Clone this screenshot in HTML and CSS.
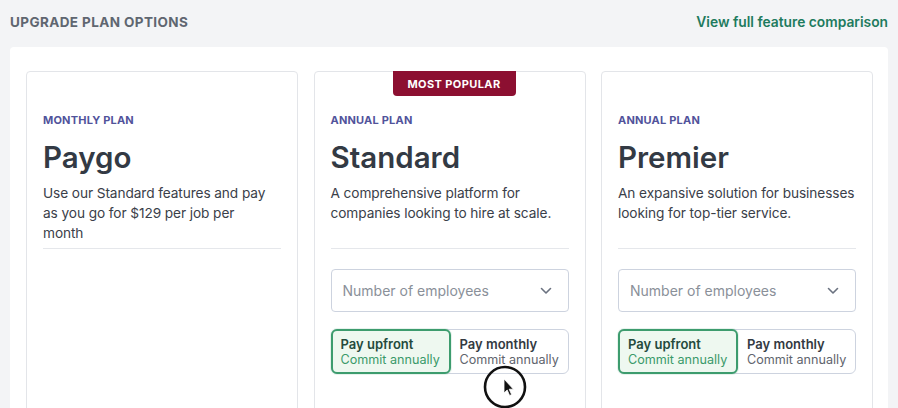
FILE: index.html
```html
<!DOCTYPE html>
<html>
<head>
<meta charset="utf-8">
<link rel="stylesheet" href="styles.css">
</head>
<body>
<div class="page">
  <header class="top">
    <h1 class="heading">UPGRADE PLAN OPTIONS</h1>
    <a class="compare" href="#">View full feature comparison</a>
  </header>
  <section class="panel">
    <div class="cards">
      <article class="card">
        <div class="plan-type">MONTHLY PLAN</div>
        <h2 class="plan-name">Paygo</h2>
        <p class="plan-desc">Use our Standard features and pay as you go for $129 per job per<br>month</p>
      </article>
      <article class="card">
        <div class="badge">MOST POPULAR</div>
        <div class="plan-type">ANNUAL PLAN</div>
        <h2 class="plan-name">Standard</h2>
        <p class="plan-desc">A comprehensive platform for companies looking to hire at scale.</p>
        <div class="select">
          <span class="placeholder">Number of employees</span>
          <svg class="chev" width="12" height="8" viewBox="0 0 12 8"><path d="M1.5 1.5 L6 6 L10.5 1.5" fill="none" stroke="#6b7280" stroke-width="1.6" stroke-linecap="round" stroke-linejoin="round"/></svg>
        </div>
        <div class="toggle">
          <div class="opt opt-on"><span class="opt-title">Pay upfront</span><span class="opt-sub">Commit annually</span></div>
          <div class="opt"><span class="opt-title">Pay monthly</span><span class="opt-sub">Commit annually</span></div>
        </div>
      </article>
      <article class="card">
        <div class="plan-type">ANNUAL PLAN</div>
        <h2 class="plan-name">Premier</h2>
        <p class="plan-desc">An expansive solution for businesses looking for top-tier service.</p>
        <div class="select">
          <span class="placeholder">Number of employees</span>
          <svg class="chev" width="12" height="8" viewBox="0 0 12 8"><path d="M1.5 1.5 L6 6 L10.5 1.5" fill="none" stroke="#6b7280" stroke-width="1.6" stroke-linecap="round" stroke-linejoin="round"/></svg>
        </div>
        <div class="toggle">
          <div class="opt opt-on"><span class="opt-title">Pay upfront</span><span class="opt-sub">Commit annually</span></div>
          <div class="opt"><span class="opt-title">Pay monthly</span><span class="opt-sub">Commit annually</span></div>
        </div>
      </article>
    </div>
  </section>
  <svg class="cursor" width="50" height="50" viewBox="0 0 50 50">
    <circle cx="25" cy="25" r="20" fill="rgba(255,255,255,0.15)" stroke="#111" stroke-width="2.6"/>
    <path d="M24 17 L24 31 L27.2 28 L29.6 33.5 L31.6 32.6 L29.2 27.2 L33.4 27.2 Z" fill="#111" stroke="#fff" stroke-width="0.8" stroke-linejoin="round"/>
  </svg>
</div>
</body>
</html>
```

FILE: styles.css
```css
* { box-sizing: border-box; }
html, body {
  margin: 0;
  padding: 0;
  background: #f3f4f6;
  font-family: Inter, "Noto Sans", "Liberation Sans", sans-serif;
  color: #343a43;
  overflow: hidden;
}
.page {
  position: relative;
  width: 898px;
  height: 408px;
  overflow: hidden;
}
.top {
  height: 44px;
  padding: 0 10px;
  display: flex;
  align-items: center;
  justify-content: space-between;
}
.heading {
  margin: 0;
  font-size: 13.5px;
  font-weight: 700;
  letter-spacing: 0.4px;
  color: #5f6670;
}
.compare {
  font-size: 13.8px;
  font-weight: 600;
  color: #1e7b5e;
  text-decoration: none;
}
.panel {
  margin: 3px 10px 0 10px;
  background: #fff;
  border-radius: 4px 4px 0 0;
  padding: 24px 15px 0 16px;
  height: 361px;
}
.cards {
  display: grid;
  grid-template-columns: 272px 272px 272px;
  justify-content: space-between;
}
.card {
  position: relative;
  border: 1px solid #e3e5e9;
  border-radius: 4px;
  padding: 40px 16px 0 16px;
  height: 400px;
}
.badge {
  position: absolute;
  top: -1px;
  left: 78px;
  width: 123px;
  height: 25px;
  background: #8c0f31;
  color: #fff;
  font-size: 11px;
  font-weight: 700;
  letter-spacing: 0.4px;
  display: flex;
  align-items: center;
  justify-content: center;
  border-radius: 0 0 4px 4px;
}
.plan-type {
  font-size: 11px;
  line-height: 16px;
  font-weight: 700;
  letter-spacing: 0.2px;
  color: #51539b;
}
.plan-name {
  margin: 11px 0 0 0;
  font-size: 29.5px;
  line-height: 36px;
  font-weight: 600;
  color: #333a44;
}
.plan-desc {
  margin: 8px 0 0 0;
  font-size: 13.7px;
  line-height: 20px;
  letter-spacing: -0.1px;
  color: #3a4049;
  min-height: 66px;
  padding-bottom: 5px;
  border-bottom: 1px solid #e5e7eb;
}
.select {
  margin-top: 20px;
  height: 43px;
  border: 1px solid #cdd3df;
  border-radius: 4px;
  display: flex;
  align-items: center;
  justify-content: space-between;
  padding: 0 16px 0 11px;
}
.placeholder {
  font-size: 14px;
  color: #8a9099;
}
.chev { display: block; }
.toggle {
  margin-top: 17px;
  height: 45px;
  border: 1px solid #cdd3df;
  border-radius: 6px;
  display: flex;
}
.opt {
  display: flex;
  flex-direction: column;
  justify-content: center;
  padding: 0 9px;
  flex: 1;
  white-space: nowrap;
}
.opt-on {
  flex: 0 0 120px;
  margin: -1px 0 -1px -1px;
  border: 2px solid #3d9c6e;
  border-radius: 6px;
  background: #eef8f0;
  padding: 0 8px;
  box-shadow: 0 0 0 1px rgba(61,156,110,0.12);
}
.opt-title {
  font-size: 13px;
  line-height: 16px;
  font-weight: 600;
  color: #333a42;
}
.opt-sub {
  font-size: 12.6px;
  line-height: 16px;
  color: #5f656e;
}
.opt-on .opt-title { color: #244a3c; }
.opt-on .opt-sub { color: #3a9a6a; }
.cursor {
  position: absolute;
  left: 480px;
  top: 362px;
}
```
